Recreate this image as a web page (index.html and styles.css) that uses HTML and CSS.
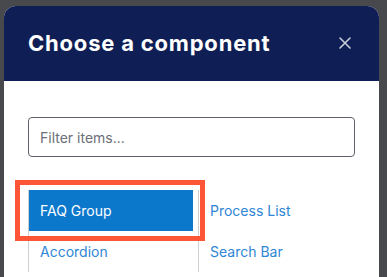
FILE: index.html
```html
<!DOCTYPE html>
<html>
<head>
<meta charset="utf-8">
<link rel="stylesheet" href="styles.css">
</head>
<body>
<div class="modal">
  <div class="modal-header">
    <h1 class="title">Choose a component</h1>
    <button class="close" aria-label="Close">
      <svg width="12" height="12" viewBox="0 0 12 12"><path d="M1 1L11 11M11 1L1 11" stroke="#c9cdd9" stroke-width="1.6" stroke-linecap="round"/></svg>
    </button>
  </div>
  <div class="modal-body">
    <input class="filter" type="text" placeholder="Filter items...">
    <div class="grid">
      <div class="col">
        <div class="item selected">FAQ Group</div>
        <div class="item">Accordion</div>
      </div>
      <div class="col">
        <div class="item">Process List</div>
        <div class="item">Search Bar</div>
      </div>
      <div class="highlight"></div>
    </div>
  </div>
</div>
</body>
</html>
```
FILE: styles.css
```css
html, body {
  margin: 0;
  padding: 0;
  height: 100%;
  overflow: hidden;
}
body {
  background: #48494d;
  font-family: "Inter", "Liberation Sans", sans-serif;
}
.modal {
  margin: 6px 0 0 4px;
  width: 375px;
  height: calc(100vh - 6px);
  background: #ffffff;
  border-radius: 12px 12px 0 0;
  overflow: hidden;
}
.modal-header {
  height: 75px;
  background: #0f1f55;
  display: flex;
  align-items: center;
  justify-content: space-between;
  padding: 0 28px 0 24px;
}
.title {
  margin: 0;
  color: #ffffff;
  font-size: 22px;
  font-weight: 700;
  letter-spacing: 0.8px;
  padding-bottom: 2px;
}
.close {
  background: none;
  border: 0;
  padding: 0;
  width: 12px;
  height: 12px;
  display: flex;
  margin-bottom: 1px;
}
.modal-body {
  padding: 36px 24px 0 24px;
  position: relative;
}
.filter {
  display: block;
  box-sizing: border-box;
  width: 327px;
  height: 40px;
  border: 1px solid #5d616b;
  border-radius: 4px;
  padding: 0 11px;
  font-family: "Inter", "Liberation Sans", sans-serif;
  font-size: 14px;
  outline: none;
}
.filter::placeholder {
  color: #6b6f78;
}
.grid {
  margin-top: 33px;
  display: flex;
  position: relative;
}
.col {
  flex: 0 0 auto;
  width: 169px;
  border-left: 1px solid #cfcfcf;
  display: flex;
  flex-direction: column;
}
.item {
  height: 41px;
  line-height: 41px;
  padding: 0 11px;
  font-size: 14px;
  color: #2e86d4;
}
.item.selected {
  width: 142px;
  background: #0c78cc;
  color: #ffffff;
}
.highlight {
  position: absolute;
  left: -13px;
  top: -10px;
  width: 180px;
  height: 51px;
  border: 5px solid #fd5536;
}
```
